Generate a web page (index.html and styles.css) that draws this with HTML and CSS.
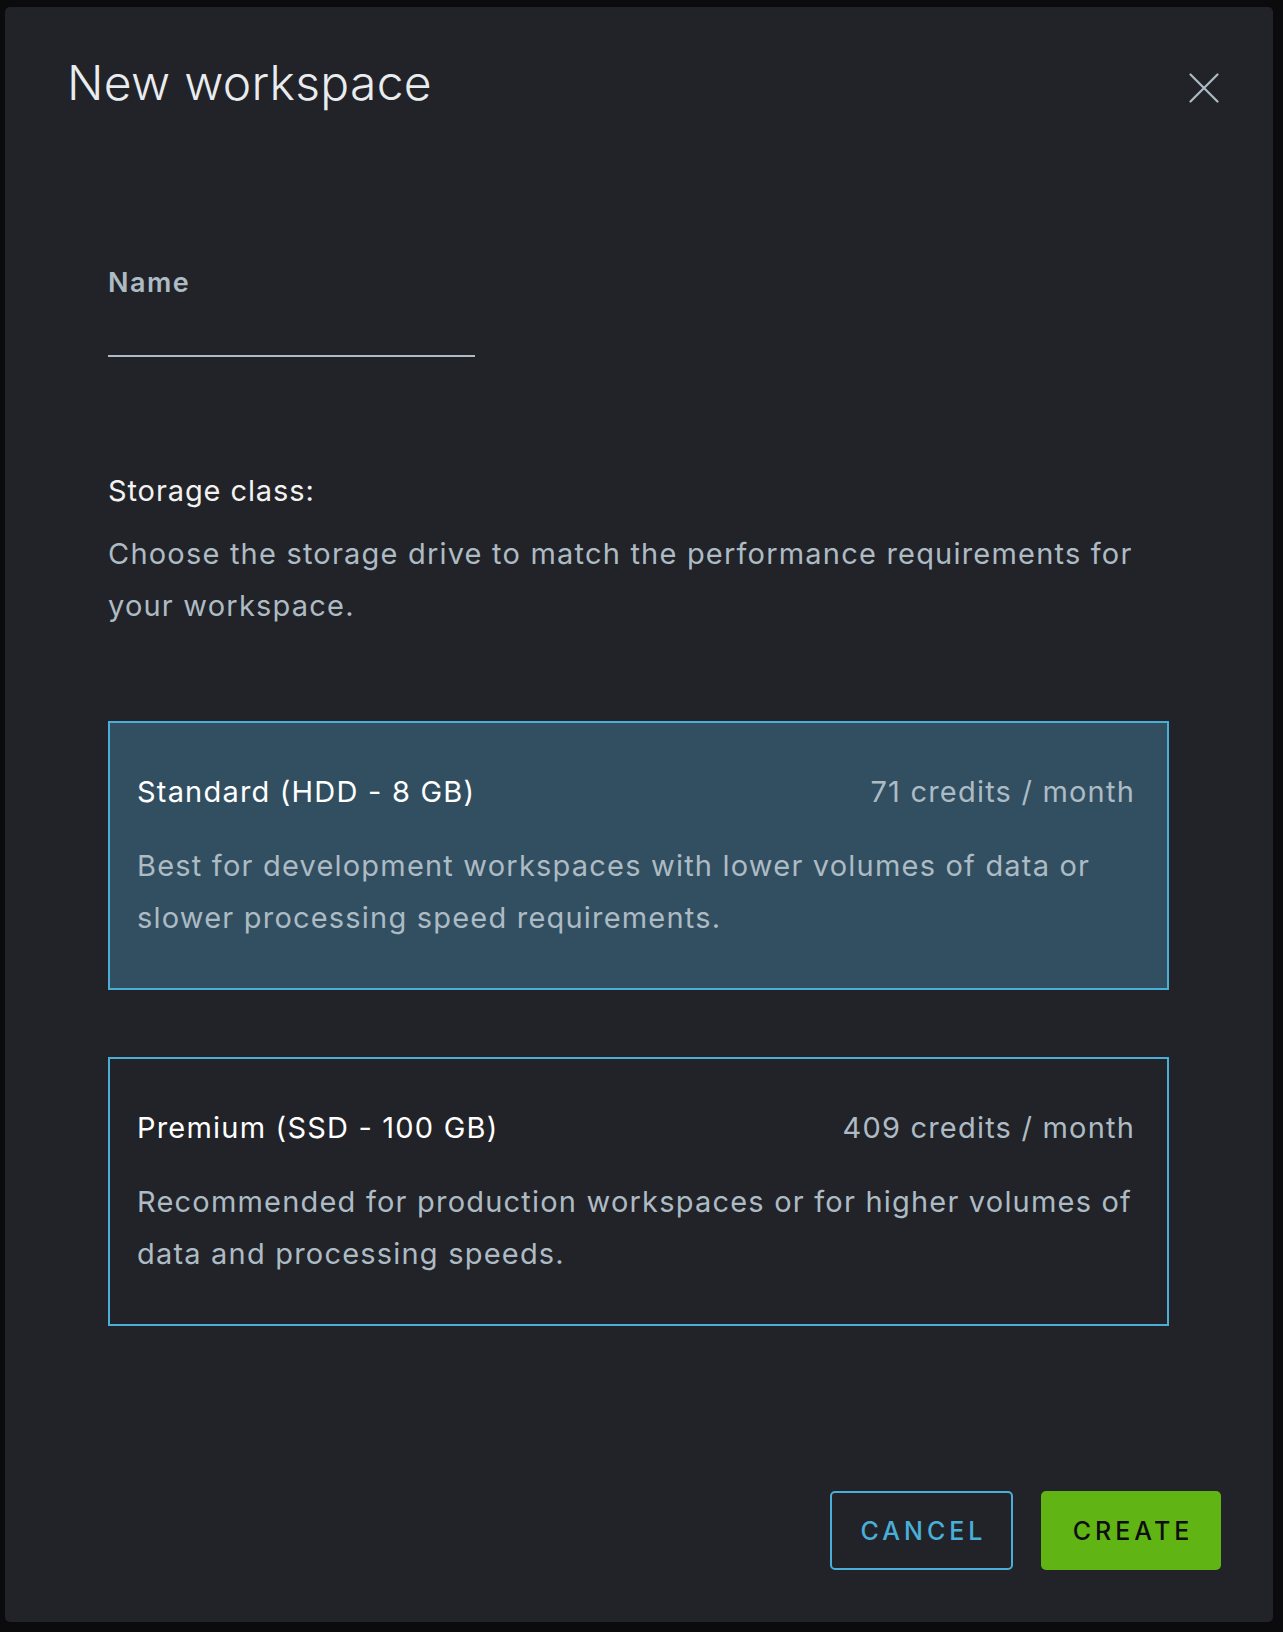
FILE: index.html
```html
<!DOCTYPE html>
<html lang="en">
<head>
<meta charset="utf-8">
<title>New workspace</title>
<link rel="stylesheet" href="styles.css">
</head>
<body>
<div class="dialog">
  <div class="header">
    <h1 class="title">New workspace</h1>
    <button class="close" aria-label="Close">
      <svg width="30" height="30" viewBox="0 0 30 30"><path d="M1.5 1.5 L28.5 28.5 M28.5 1.5 L1.5 28.5" stroke="#adbbc4" stroke-width="2.2" stroke-linecap="round" fill="none"/></svg>
    </button>
  </div>
  <div class="body">
    <label class="field-label">Name</label>
    <div class="input"></div>
    <div class="section-title">Storage class:</div>
    <p class="section-desc">Choose the storage drive to match the performance requirements for your workspace.</p>
    <div class="card selected">
      <div class="card-head">
        <span class="card-title">Standard (HDD - 8 GB)</span>
        <span class="card-price">71 credits / month</span>
      </div>
      <p class="card-desc">Best for development workspaces with lower volumes of data or slower processing speed requirements.</p>
    </div>
    <div class="card second">
      <div class="card-head">
        <span class="card-title">Premium (SSD - 100 GB)</span>
        <span class="card-price">409 credits / month</span>
      </div>
      <p class="card-desc">Recommended for production workspaces or for higher volumes of data and processing speeds.</p>
    </div>
  </div>
  <div class="footer">
    <button class="btn btn-outline">CANCEL</button>
    <button class="btn btn-primary">CREATE</button>
  </div>
</div>
</body>
</html>
```
FILE: styles.css
```css
html, body {
  margin: 0;
  padding: 0;
  background: #0b0b0d;
}
body {
  font-family: "Inter", "Lato", sans-serif;
  height: 1632px;
}
.dialog {
  box-sizing: border-box;
  margin: 7px 10px 0 5px;
  width: 1268px;
  height: 1615px;
  background: #222328;
  border-radius: 5px;
  padding: 46px 55px 52px 62px;
  display: flex;
  flex-direction: column;
}
.header {
  display: flex;
  justify-content: space-between;
  align-items: flex-start;
}
.title {
  margin: 0;
  font-size: 48px;
  line-height: 60px;
  font-weight: 300;
  letter-spacing: 0.3px;
  color: #e9ecef;
}
.close {
  margin-top: 20px;
  margin-right: -1px;
  padding: 0;
  border: 0;
  background: none;
  width: 30px;
  height: 30px;
  display: block;
}
.close svg { display: block; }
.body {
  padding: 0 49px 0 41px;
  display: flex;
  flex-direction: column;
  letter-spacing: 1.2px;
}
.field-label {
  margin-top: 154px;
  font-size: 27px;
  line-height: 32px;
  font-weight: 600;
  letter-spacing: 1.5px;
  color: #adbbc4;
}
.input {
  margin-top: 15px;
  width: 367px;
  height: 41px;
  border-bottom: 2px solid #adbbc4;
}
.section-title {
  margin-top: 108px;
  font-size: 29px;
  line-height: 52px;
  letter-spacing: 0.9px;
  color: #f2f2f2;
}
.section-desc {
  margin: 11px 0 0;
  font-size: 29px;
  line-height: 52px;
  color: #adbbc4;
}
.card {
  box-sizing: border-box;
  margin-top: 89px;
  height: 269px;
  border: 2px solid #49afd9;
  padding: 43px 32px 0 27px;
}
.card.selected {
  background: #324f61;
}
.card.second {
  margin-top: 67px;
}
.card-head {
  display: flex;
  justify-content: space-between;
  font-size: 29px;
  line-height: 52px;
}
.card-title { color: #ffffff; }
.card-price { color: #adbbc4; }
.card-desc {
  margin: 22px 0 0;
  font-size: 29px;
  line-height: 52px;
  color: #adbbc4;
}
.footer {
  margin-top: auto;
  margin-right: -3px;
  display: flex;
  justify-content: flex-end;
  gap: 28px;
}
.btn {
  box-sizing: border-box;
  height: 79px;
  border-radius: 5px;
  font-family: "Inter", sans-serif;
  font-weight: 500;
  font-size: 25px;
  letter-spacing: 4px;
  padding: 0 0 0 4px;
  cursor: pointer;
}
.btn-outline {
  width: 183px;
  background: transparent;
  border: 2px solid #49afd9;
  color: #49afd9;
}
.btn-primary {
  width: 180px;
  background: #60b515;
  border: 0;
  color: #0e0e0e;
}
```
